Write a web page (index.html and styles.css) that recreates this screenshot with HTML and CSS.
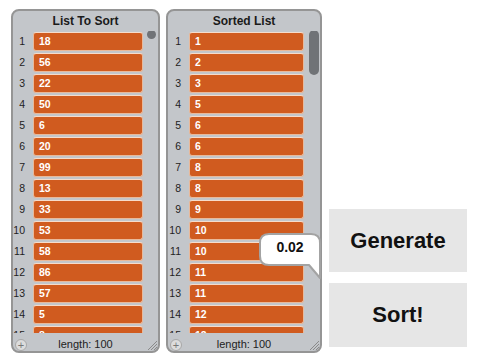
FILE: index.html
```html
<!DOCTYPE html>
<html>
<head>
<meta charset="utf-8">
<link rel="stylesheet" href="styles.css">
</head>
<body>
<div class="stage">
  <div class="panel panel-a">
    <div class="title">List To Sort</div>
    <div class="list">
      <div class="row"><span class="idx">1</span><span class="cell">18</span></div>
      <div class="row"><span class="idx">2</span><span class="cell">56</span></div>
      <div class="row"><span class="idx">3</span><span class="cell">22</span></div>
      <div class="row"><span class="idx">4</span><span class="cell">50</span></div>
      <div class="row"><span class="idx">5</span><span class="cell">6</span></div>
      <div class="row"><span class="idx">6</span><span class="cell">20</span></div>
      <div class="row"><span class="idx">7</span><span class="cell">99</span></div>
      <div class="row"><span class="idx">8</span><span class="cell">13</span></div>
      <div class="row"><span class="idx">9</span><span class="cell">33</span></div>
      <div class="row"><span class="idx">10</span><span class="cell">53</span></div>
      <div class="row"><span class="idx">11</span><span class="cell">58</span></div>
      <div class="row"><span class="idx">12</span><span class="cell">86</span></div>
      <div class="row"><span class="idx">13</span><span class="cell">57</span></div>
      <div class="row"><span class="idx">14</span><span class="cell">5</span></div>
      <div class="row"><span class="idx">15</span><span class="cell">8</span></div>
      <div class="thumb dot"></div>
    </div>
    <div class="footer">
      <span class="add">+</span>
      <span class="len">length: 100</span>
      <svg class="grip" width="11" height="11" viewBox="0 0 11 11"><path d="M10 1 L1 10 M10 4 L4 10 M10 7 L7 10" stroke="#8a8a8a" stroke-width="1"/></svg>
    </div>
  </div>
  <div class="panel panel-b">
    <div class="title">Sorted List</div>
    <div class="list">
      <div class="row"><span class="idx">1</span><span class="cell">1</span></div>
      <div class="row"><span class="idx">2</span><span class="cell">2</span></div>
      <div class="row"><span class="idx">3</span><span class="cell">3</span></div>
      <div class="row"><span class="idx">4</span><span class="cell">5</span></div>
      <div class="row"><span class="idx">5</span><span class="cell">6</span></div>
      <div class="row"><span class="idx">6</span><span class="cell">6</span></div>
      <div class="row"><span class="idx">7</span><span class="cell">8</span></div>
      <div class="row"><span class="idx">8</span><span class="cell">8</span></div>
      <div class="row"><span class="idx">9</span><span class="cell">9</span></div>
      <div class="row"><span class="idx">10</span><span class="cell">10</span></div>
      <div class="row"><span class="idx">11</span><span class="cell">10</span></div>
      <div class="row"><span class="idx">12</span><span class="cell">11</span></div>
      <div class="row"><span class="idx">13</span><span class="cell">11</span></div>
      <div class="row"><span class="idx">14</span><span class="cell">12</span></div>
      <div class="row"><span class="idx">15</span><span class="cell">12</span></div>
      <div class="thumb bar"></div>
    </div>
    <div class="footer">
      <span class="add">+</span>
      <span class="len">length: 100</span>
      <svg class="grip" width="11" height="11" viewBox="0 0 11 11"><path d="M10 1 L1 10 M10 4 L4 10 M10 7 L7 10" stroke="#8a8a8a" stroke-width="1"/></svg>
    </div>
  </div>
  <div class="buttons">
    <div class="btn btn-gen">Generate</div>
    <div class="btn btn-sort">Sort!</div>
  </div>
  <div class="bubble">
    <svg width="66" height="48" viewBox="0 0 66 48"><path d="M10 1 H52 Q61 1 61 10 V45 L50 32 H10 Q1 32 1 23 V10 Q1 1 10 1 Z" fill="#fff" stroke="#a3a3a3" stroke-width="2" stroke-linejoin="round"/></svg>
    <span class="bubble-text">0.02</span>
  </div>
</div>
</body>
</html>
```
FILE: styles.css
```css
html, body {
  margin: 0;
  padding: 0;
  background: #fff;
  font-family: "Liberation Sans", Arial, sans-serif;
}
.stage {
  position: relative;
  width: 480px;
  height: 360px;
  display: flex;
  align-items: flex-start;
  padding: 9px 0 0 11px;
  box-sizing: border-box;
  gap: 6px;
}
.panel {
  box-sizing: border-box;
  height: 344px;
  border: 2px solid #959595;
  border-radius: 8px;
  background: #c3c6ca;
  display: flex;
  flex-direction: column;
}
.panel-a { width: 149px; }
.panel-b { width: 156px; }
.title {
  height: 20px;
  line-height: 21px;
  text-align: center;
  font-weight: bold;
  font-size: 12px;
  color: #1a1a1a;
}
.list {
  position: relative;
  height: 302px;
  overflow: hidden;
  padding-top: 1px;
  box-sizing: border-box;
}
.row {
  display: flex;
  height: 19px;
  margin-bottom: 2px;
  align-items: stretch;
}
.idx {
  box-sizing: border-box;
  text-align: right;
  padding-right: 8px;
  font-size: 10.5px;
  line-height: 19px;
  color: #222;
}
.panel-a .idx { width: 20px; }
.panel-b .idx { width: 21px; }
.cell {
  box-sizing: border-box;
  background: #d05b1f;
  border: 1px solid #e9b99a;
  border-top-color: #f6dccb;
  border-radius: 3px;
  color: #fff;
  font-weight: bold;
  font-size: 10.5px;
  line-height: 17px;
  padding-left: 5px;
}
.panel-a .cell { width: 110px; }
.panel-b .cell { width: 115px; }
.thumb {
  position: absolute;
  background: #707377;
}
.dot {
  left: 134px;
  top: -1px;
  width: 9px;
  height: 9px;
  border-radius: 50%;
}
.bar {
  left: 141px;
  top: -1px;
  width: 10px;
  height: 45px;
  border-radius: 5px;
}
.footer {
  position: relative;
  height: 18px;
  display: flex;
  align-items: center;
  justify-content: center;
  padding-top: 3px;
  box-sizing: border-box;
}
.len {
  font-size: 11px;
  color: #222;
}
.add {
  position: absolute;
  left: 2px;
  top: 6px;
  width: 10px;
  height: 10px;
  border-radius: 50%;
  background: #dcdcdc;
  border: 1px solid #a8a8a8;
  color: #777;
  font-size: 11px;
  line-height: 10px;
  text-align: center;
}
.grip {
  position: absolute;
  right: 0;
  bottom: 0;
}
.buttons {
  display: flex;
  flex-direction: column;
  gap: 11px;
  margin-top: 200px;
  margin-left: 1px;
}
.btn {
  width: 138px;
  background: #e6e6e6;
  font-weight: bold;
  font-size: 22px;
  color: #111;
  display: flex;
  align-items: center;
  justify-content: center;
}
.btn-gen { height: 63px; }
.btn-sort { height: 64px; }
.bubble {
  position: absolute;
  left: 259px;
  top: 233px;
  width: 66px;
  height: 48px;
}
.bubble svg { display: block; }
.bubble-text {
  position: absolute;
  left: 1px;
  top: 6px;
  width: 60px;
  text-align: center;
  font-weight: bold;
  font-size: 14px;
  color: #111;
}
```
